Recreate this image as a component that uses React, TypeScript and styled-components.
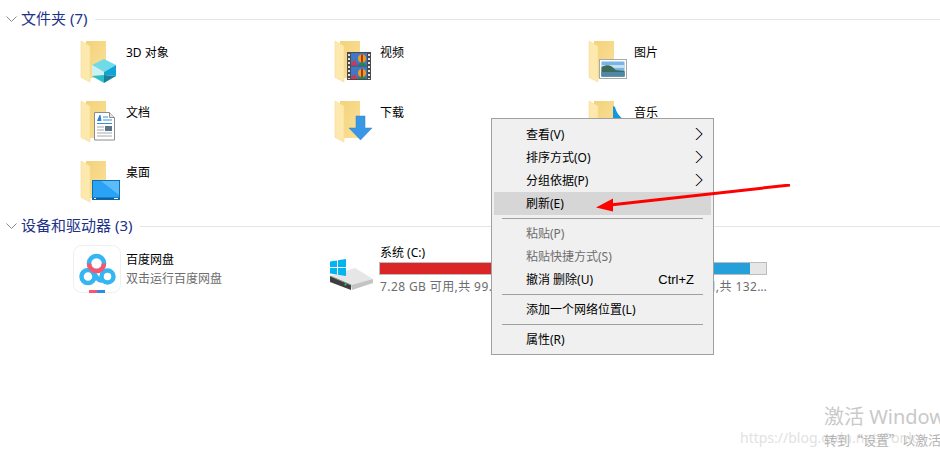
import React from 'react'
import styled, { createGlobalStyle } from 'styled-components'

const FONT = `"Noto Sans", "Noto Sans CJK SC", sans-serif`

const GlobalStyle = createGlobalStyle`
  html, body {
    margin: 0;
    background: #fff;
    overflow: hidden;
  }
  body {
    font-family: ${FONT};
    font-size: 12px;
  }
`

const FolderIcon: React.FC<{ children?: React.ReactNode }> = ({ children }) => (
  <IconSvg viewBox="0 0 48 48">
    <defs>
      <linearGradient id="folderBack" x1="0" y1="0" x2="1" y2="1">
        <stop offset="0" stopColor="#f3d27a" />
        <stop offset="1" stopColor="#fbe09a" />
      </linearGradient>
    </defs>
    <path d="M13 3h20v37H13z" fill="url(#folderBack)" />
    <path d="M8 3l9 5v36l-2-1-7-3.500z" fill="#fde9ad" stroke="#f5dc98" strokeWidth="0.6" />
    {children}
  </IconSvg>
)

const Cube = () => (
  <g>
    <path d="M31 21l12 6-12 7-12-7z" fill="#6fdbe6" />
    <path d="M19 27l12 7v3l-12 1z" fill="#cdf1f3" />
    <path d="M43 27l-12 7v3l12 1z" fill="#0fa4d6" />
    <path d="M19 38l12-1v8z" fill="#29c0cc" />
    <path d="M43 38l-12-1v8z" fill="#1b7f9c" />
  </g>
)

const DocumentPage = () => (
  <g>
    <path d="M21.500 14.500h15l5 5v22.500h-20z" fill="#fff" stroke="#8c8c8c" />
    <path d="M36.500 14.500v5h5" fill="#e4e4e4" stroke="#8c8c8c" />
    <path d="M24 23l2.500-6h1l1 6z" fill="#2c7fd0" />
    <path d="M30 19h5M30 22h9M24 25.500h15" stroke="#3b8fd6" strokeWidth="1" />
    <path d="M24 29h7M24 32h7M24 35h15M24 38h15" stroke="#a8a8a8" strokeWidth="1" />
    <rect x="32" y="28" width="7" height="5" fill="#58788a" />
  </g>
)

const FilmStrip = () => (
  <g>
    <rect x="20" y="14" width="24" height="28" fill="#4a4a4a" />
    <rect x="24" y="15" width="16" height="12.500" fill="#3d78c9" />
    <rect x="24" y="28.500" width="16" height="12.500" fill="#3d78c9" />
    <path d="M24 25l4-3 3 5.500h-7z" fill="#c43c5c" />
    <path d="M24 39l4-3 3 5h-7z" fill="#c43c5c" />
    <path d="M30 27.500l5-4 5 4zM30 41l5-4 5 4z" fill="#1e8a50" />
    <circle cx="35" cy="20.500" r="4" fill="#e8a11e" />
    <path d="M35 16.500v8" stroke="#b8321e" strokeWidth="2" />
    <circle cx="35" cy="35" r="4" fill="#e8a11e" />
    <path d="M35 31v8" stroke="#b8321e" strokeWidth="2" />
    <path d="M22 16v25M42 16v25" stroke="#e4e4e4" strokeWidth="2" strokeDasharray="2 2" />
  </g>
)

const Landscape = () => (
  <g>
    <rect x="18.500" y="21.500" width="27" height="19" fill="#fff" stroke="#a8a8a8" />
    <rect x="20.500" y="23.500" width="23" height="15" fill="#78b4e6" />
    <path d="M20.500 27h23v3h-23z" fill="#c4e0f2" />
    <path d="M20.500 29c6-3 10-2 14 3l9 1v5.500h-23z" fill="#3e6a58" />
    <path d="M20.500 34h23v4.500h-23z" fill="#4e87a8" />
  </g>
)

const DownloadArrow = () => (
  <path d="M29 18h9v12h7L33.500 42 22 30h7z" fill="#3a97e6" stroke="#2f80c8" strokeWidth="0.5" />
)

const MusicNote = () => (
  <path d="M32 8l2 1c1 5 4 9 9 13v14h-11z" fill="#1296e0" />
)

const Monitor = () => (
  <g>
    <rect x="19.500" y="22.500" width="27" height="19" fill="#2aa2f5" stroke="#0e6fb5" />
    <path d="M28 23h18v14z" fill="#5bbcf8" />
    <rect x="20" y="39.500" width="26" height="2" fill="#0e5f9e" />
    <path d="M21 40.500h2M41 40.500h4" stroke="#fff" strokeWidth="1" />
  </g>
)

const BaiduIcon = () => (
  <IconSvg viewBox="0 0 48 48">
    <rect x="0.500" y="0.500" width="47" height="47" rx="8" fill="#fff" stroke="#efefef" />
    <circle cx="15" cy="31.500" r="6.500" fill="none" stroke="#35b6f2" strokeWidth="4.500" />
    <circle cx="34.500" cy="31.500" r="6" fill="none" stroke="#35b6f2" strokeWidth="4.500" />
    <path d="M20 27c3 5 6 10 10 8" fill="none" stroke="#35b6f2" strokeWidth="4.500" />
    <circle cx="23.500" cy="18.500" r="7.500" fill="none" stroke="#35b6f2" strokeWidth="4.500" />
    <path d="M16 18.500a7.500 7.500 0 0 0 15 0" fill="none" stroke="#f9566e" strokeWidth="4.500" />
    <rect x="16" y="45" width="8" height="3" fill="#f9566e" />
    <rect x="24" y="45" width="8" height="3" fill="#2a8cf0" />
  </IconSvg>
)

const DriveIcon = () => (
  <IconSvg viewBox="0 0 48 48">
    <path d="M3 31l25-8 18 11-22 6z" fill="#e6e6e6" />
    <path d="M24 40l22-6v4l-21 7z" fill="#c4c4c4" />
    <path d="M3 31l21 9v5L3 37z" fill="#3e3e3e" />
    <path d="M3 31l21 9" stroke="#8c8c8c" fill="none" />
    <circle cx="18.500" cy="39.500" r="1" fill="#35d060" />
    <path d="M3 16.500l7-1v6.500H3zM11 15.300l8-1.300v8h-8zM3 23h7v6.500l-7-1zM11 23h8v8l-8-1.300z" fill="#02b4f0" />
  </IconSvg>
)

const Chevron = () => (
  <ChevronSvg viewBox="0 0 11 7">
    <path d="M0.500 0.500L5.500 5.500L10.500 0.500" fill="none" stroke="#8a8a8a" />
  </ChevronSvg>
)

const folders: { name: string; overlay: React.ReactNode }[] = [
  { name: '3D 对象', overlay: <Cube /> },
  { name: '视频', overlay: <FilmStrip /> },
  { name: '图片', overlay: <Landscape /> },
  { name: '文档', overlay: <DocumentPage /> },
  { name: '下载', overlay: <DownloadArrow /> },
  { name: '音乐', overlay: <MusicNote /> },
  { name: '桌面', overlay: <Monitor /> },
]

type MenuEntry =
  | { separator: true }
  | {
      label: string
      shortcut?: string
      submenu?: boolean
      disabled?: boolean
      active?: boolean
    }

const menu: MenuEntry[] = [
  { label: '查看(V)', submenu: true },
  { label: '排序方式(O)', submenu: true },
  { label: '分组依据(P)', submenu: true },
  { label: '刷新(E)', active: true },
  { separator: true },
  { label: '粘贴(P)', disabled: true },
  { label: '粘贴快捷方式(S)', disabled: true },
  { label: '撤消 删除(U)', shortcut: 'Ctrl+Z' },
  { separator: true },
  { label: '添加一个网络位置(L)' },
  { separator: true },
  { label: '属性(R)' },
]

const App: React.FC = () => {
  return (
    <Page>
      <GlobalStyle />
      <GroupHeader>
        <Chevron />
        <GroupTitle>文件夹 (7)</GroupTitle>
        <GroupRule />
      </GroupHeader>
      <ItemGrid>
        {folders.map((f) => (
          <Item key={f.name}>
            <FolderIcon>{f.overlay}</FolderIcon>
            <FolderName>{f.name}</FolderName>
          </Item>
        ))}
      </ItemGrid>

      <GroupHeader $spaced>
        <Chevron />
        <GroupTitle>设备和驱动器 (3)</GroupTitle>
        <GroupRule />
      </GroupHeader>
      <ItemGrid>
        <Item>
          <BaiduIcon />
          <AppInfo>
            <ItemName>百度网盘</ItemName>
            <ItemNote>双击运行百度网盘</ItemNote>
          </AppInfo>
        </Item>
        <Item>
          <DriveIcon />
          <DriveInfo>
            <ItemName>系统 (C:)</ItemName>
            <UsageBar>
              <UsageFill $full style={{ width: '93%' }} />
            </UsageBar>
            <ItemNote $spread>7.28 GB 可用,共 99.9 GB</ItemNote>
          </DriveInfo>
        </Item>
        <Item>
          <DriveIcon />
          <DriveInfo>
            <ItemName>本地磁盘 (D:)</ItemName>
            <UsageBar>
              <UsageFill style={{ width: '88%' }} />
            </UsageBar>
            <ItemNote $spread>16.90 GB 可用,共 132 GB</ItemNote>
          </DriveInfo>
        </Item>
      </ItemGrid>

      <ContextMenu>
        {menu.map((entry, i) =>
          'separator' in entry ? (
            <MenuSeparator key={i} />
          ) : (
            <MenuItem key={i} $active={entry.active} $disabled={entry.disabled}>
              <span>{entry.label}</span>
              {entry.shortcut && <Shortcut>{entry.shortcut}</Shortcut>}
              {entry.submenu && (
                <SubmenuArrow viewBox="0 0 8 14">
                  <path d="M0.500 1l6 6-6 6" fill="none" stroke="#e88a3a" />
                  <path d="M1.500 1l6 6-6 6" fill="none" stroke="#3f8ae0" />
                  <path d="M1 1l6 6-6 6" fill="none" stroke="#2c2c3c" />
                </SubmenuArrow>
              )}
            </MenuItem>
          ),
        )}
      </ContextMenu>

      <RedArrow viewBox="0 0 200 30">
        <path d="M194 1L14 21" stroke="#f00" strokeWidth="3" />
        <path d="M0 23.500L17 14.500L17 27.500z" fill="#f00" />
      </RedArrow>

      <BlogMark>https://blog.csdn.net/Ponlo</BlogMark>
      <Watermark>
        <ActivateTitle>激活 Windows</ActivateTitle>
        <ActivateHint>转到“设置”以激活</ActivateHint>
      </Watermark>
    </Page>
  )
}

export default App

const Page = styled.div`
  position: relative;
  width: 940px;
  height: 454px;
  padding-top: 9px;
  box-sizing: border-box;
  overflow: hidden;
  background: #fff;
`
const IconSvg = styled.svg`
  display: block;
  flex: none;
  width: 48px;
  height: 48px;
`
const ChevronSvg = styled.svg`
  display: block;
  flex: none;
  width: 11px;
  height: 7px;
  margin-right: 4px;
`
const GroupHeader = styled.div<{ $spaced?: boolean }>`
  display: flex;
  align-items: center;
  height: 20px;
  padding-left: 6px;
  margin-top: ${({ $spaced }) => ($spaced ? '10px' : '0')};
`
const GroupTitle = styled.div`
  position: relative;
  top: -1px;
  color: #1e3287;
  font-size: 15px;
  line-height: 20px;
  white-space: nowrap;
`
const GroupRule = styled.div`
  flex: 1;
  height: 1px;
  margin-left: 8px;
  background: #e5e5e5;
`
const ItemGrid = styled.div`
  display: grid;
  grid-template-columns: repeat(3, 254px);
  grid-auto-rows: 48px;
  row-gap: 12px;
  margin-top: 9px;
  padding-left: 73px;
`
const Item = styled.div`
  display: flex;
  gap: 5px;
`
const FolderName = styled.div`
  padding-top: 6px;
  color: #000;
  line-height: 18px;
`
const AppInfo = styled.div`
  display: flex;
  flex-direction: column;
  gap: 1px;
  padding-top: 6px;
`
const ItemName = styled.div`
  color: #000;
  line-height: 18px;
`
const ItemNote = styled.div<{ $spread?: boolean }>`
  width: 134px;
  color: #6d6d6d;
  line-height: 18px;
  letter-spacing: ${({ $spread }) => ($spread ? '0.4px' : '0')};
  white-space: nowrap;
  overflow: hidden;
  text-overflow: ellipsis;
`
const DriveInfo = styled.div`
  display: flex;
  flex-direction: column;
  margin-top: -1px;
`
const UsageBar = styled.div`
  width: 134px;
  height: 15px;
  margin: 0 0 3px -1px;
  box-sizing: border-box;
  border: 1px solid #bcbcbc;
  background: #e6e6e6;
`
const UsageFill = styled.div<{ $full?: boolean }>`
  height: 100%;
  background: ${({ $full }) => ($full ? '#da2626' : '#26a0da')};
`
const ContextMenu = styled.div`
  position: absolute;
  left: 491px;
  top: 118px;
  width: 223px;
  box-sizing: border-box;
  padding: 4px 2px 3px;
  background: #f0f0f0;
  border: 1px solid #a0a0a0;
`
const MenuItem = styled.div<{ $active?: boolean; $disabled?: boolean }>`
  position: relative;
  display: flex;
  align-items: center;
  justify-content: space-between;
  height: 23px;
  padding: 0 17px 1px 32px;
  box-sizing: border-box;
  color: ${({ $disabled }) => ($disabled ? '#6d6d6d' : '#000')};
  background: ${({ $active }) => ($active ? '#d6d6d6' : 'transparent')};
`
const Shortcut = styled.span`
  font-family: "Liberation Sans", sans-serif;
  font-size: 13px;
`
const SubmenuArrow = styled.svg`
  position: absolute;
  right: 8px;
  top: 4px;
  width: 8px;
  height: 14px;
`
const MenuSeparator = styled.div`
  height: 1px;
  margin: 3px 8px 3px 8px;
  background: #a0a0a0;
`
const RedArrow = styled.svg`
  position: absolute;
  left: 596px;
  top: 184px;
  width: 200px;
  height: 30px;
`
const Watermark = styled.div`
  position: absolute;
  left: 824px;
  top: 403px;
  white-space: nowrap;
`
const ActivateTitle = styled.div`
  color: #c9c9c9;
  font-size: 20px;
  line-height: 28px;
`
const ActivateHint = styled.div`
  color: #b4b4b4;
  font-family: "Noto Sans CJK SC", sans-serif;
  font-size: 13px;
  line-height: 18px;
`
const BlogMark = styled.div`
  position: absolute;
  left: 740px;
  top: 429px;
  color: #e2e2e2;
  font-size: 14px;
  line-height: 18px;
  white-space: nowrap;
`
